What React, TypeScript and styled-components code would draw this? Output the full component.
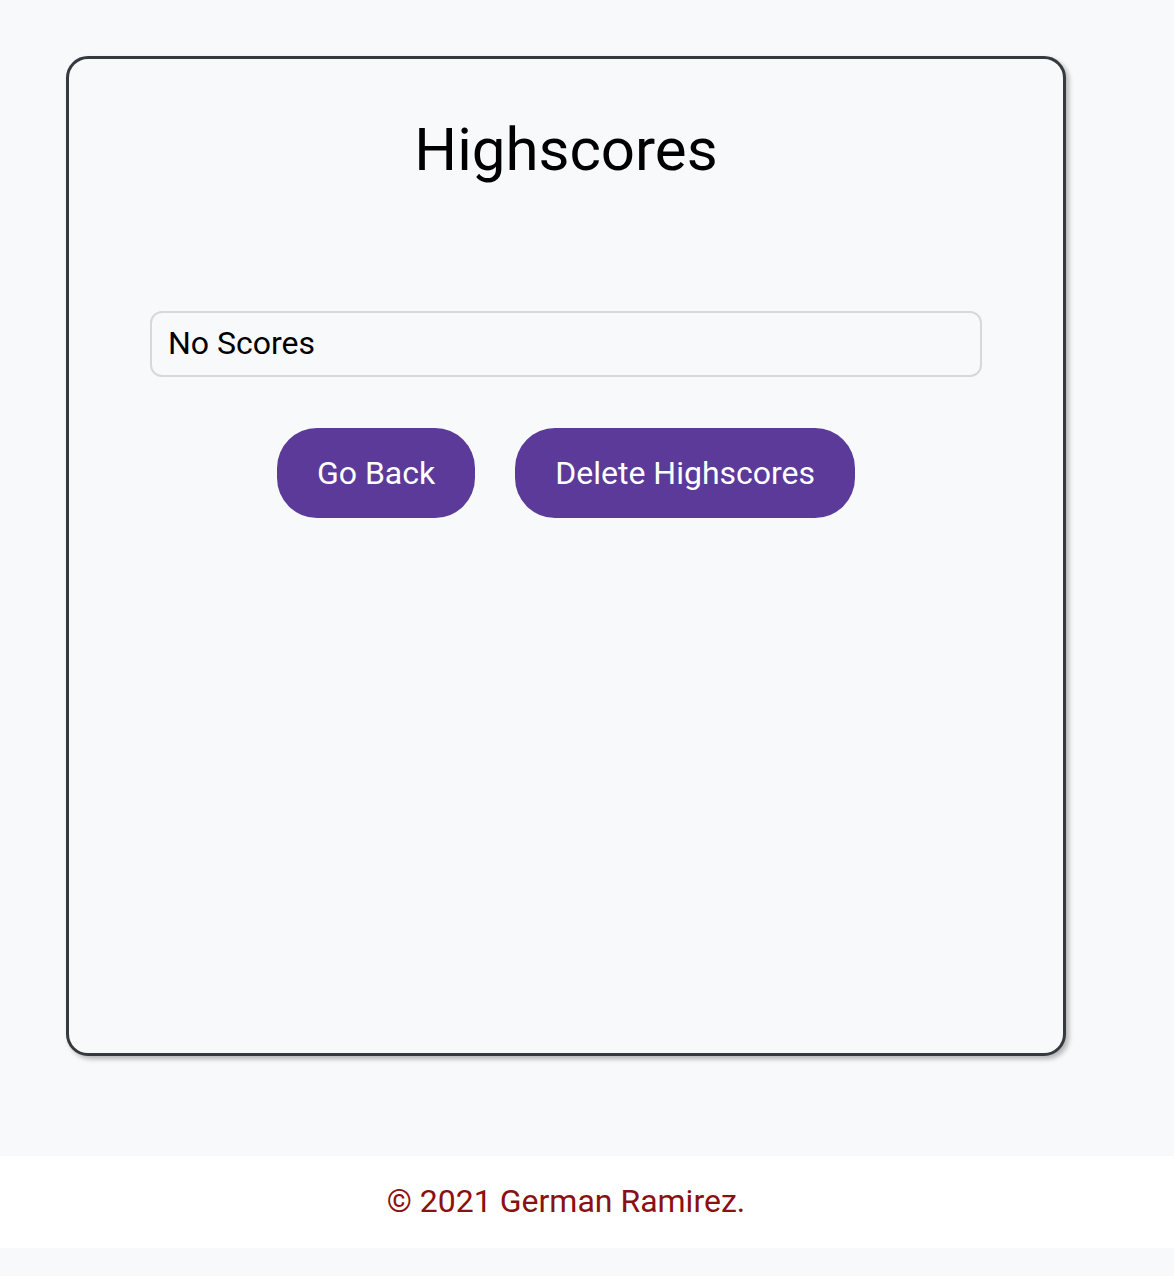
import React from "react";
import styled, { createGlobalStyle } from "styled-components";

const GlobalStyle = createGlobalStyle`
  html, body {
    margin: 0;
    padding: 0;
    background: #f8f9fa;
    font-family: Roboto, "Liberation Sans", Arial, sans-serif;
  }
  * { box-sizing: border-box; }
`;

const Page = styled.div`
  display: flex;
  flex-direction: column;
  min-height: 1276px;
  background: #f8f9fa;
`;

const Main = styled.main`
  width: 1132px;
  padding-top: 56px;
  padding-bottom: 100px;
  display: flex;
  justify-content: center;
`;

const Card = styled.section`
  width: 1000px;
  height: 1000px;
  border: 3px solid #343a40;
  border-radius: 22px;
  box-shadow: 3px 3px 5px rgba(0, 0, 0, 0.28);
  background: #f8f9fa;
  display: flex;
  flex-direction: column;
  align-items: center;
  padding: 56px 81px 0;
`;

const Title = styled.h1`
  margin: 0;
  font-size: 60px;
  line-height: 70px;
  font-weight: 400;
  color: #000;
`;

const ScoreList = styled.ul`
  list-style: none;
  margin: 126px 0 0;
  padding: 0;
  width: 100%;
`;

const ScoreItem = styled.li`
  height: 66px;
  border: 2px solid #d7d8da;
  border-radius: 12px;
  padding: 0 16px 2px;
  display: flex;
  align-items: center;
  font-size: 32px;
  color: #000;
`;

const Actions = styled.div`
  margin-top: 51px;
  display: flex;
  gap: 40px;
  justify-content: center;
`;

const Button = styled.button`
  height: 90px;
  padding: 0 40px;
  border: none;
  border-radius: 40px;
  background: #5b3a99;
  color: #fff;
  font-family: Roboto, "Liberation Sans", Arial, sans-serif;
  font-size: 32px;
  font-weight: 400;
  cursor: pointer;
`;

const Footer = styled.footer`
  background: #fff;
  padding: 26px 0 28px;
`;

const FooterText = styled.p`
  width: 1132px;
  margin: 0;
  text-align: center;
  font-size: 32px;
  line-height: 38px;
  color: #8b1111;
`;

export default function App() {
  return (
    <>
      <GlobalStyle />
      <Page>
        <Main>
          <Card>
            <Title>Highscores</Title>
            <ScoreList>
              <ScoreItem>No Scores</ScoreItem>
            </ScoreList>
            <Actions>
              <Button>Go Back</Button>
              <Button>Delete Highscores</Button>
            </Actions>
          </Card>
        </Main>
        <Footer>
          <FooterText>© 2021 German Ramirez.</FooterText>
        </Footer>
      </Page>
    </>
  );
}
